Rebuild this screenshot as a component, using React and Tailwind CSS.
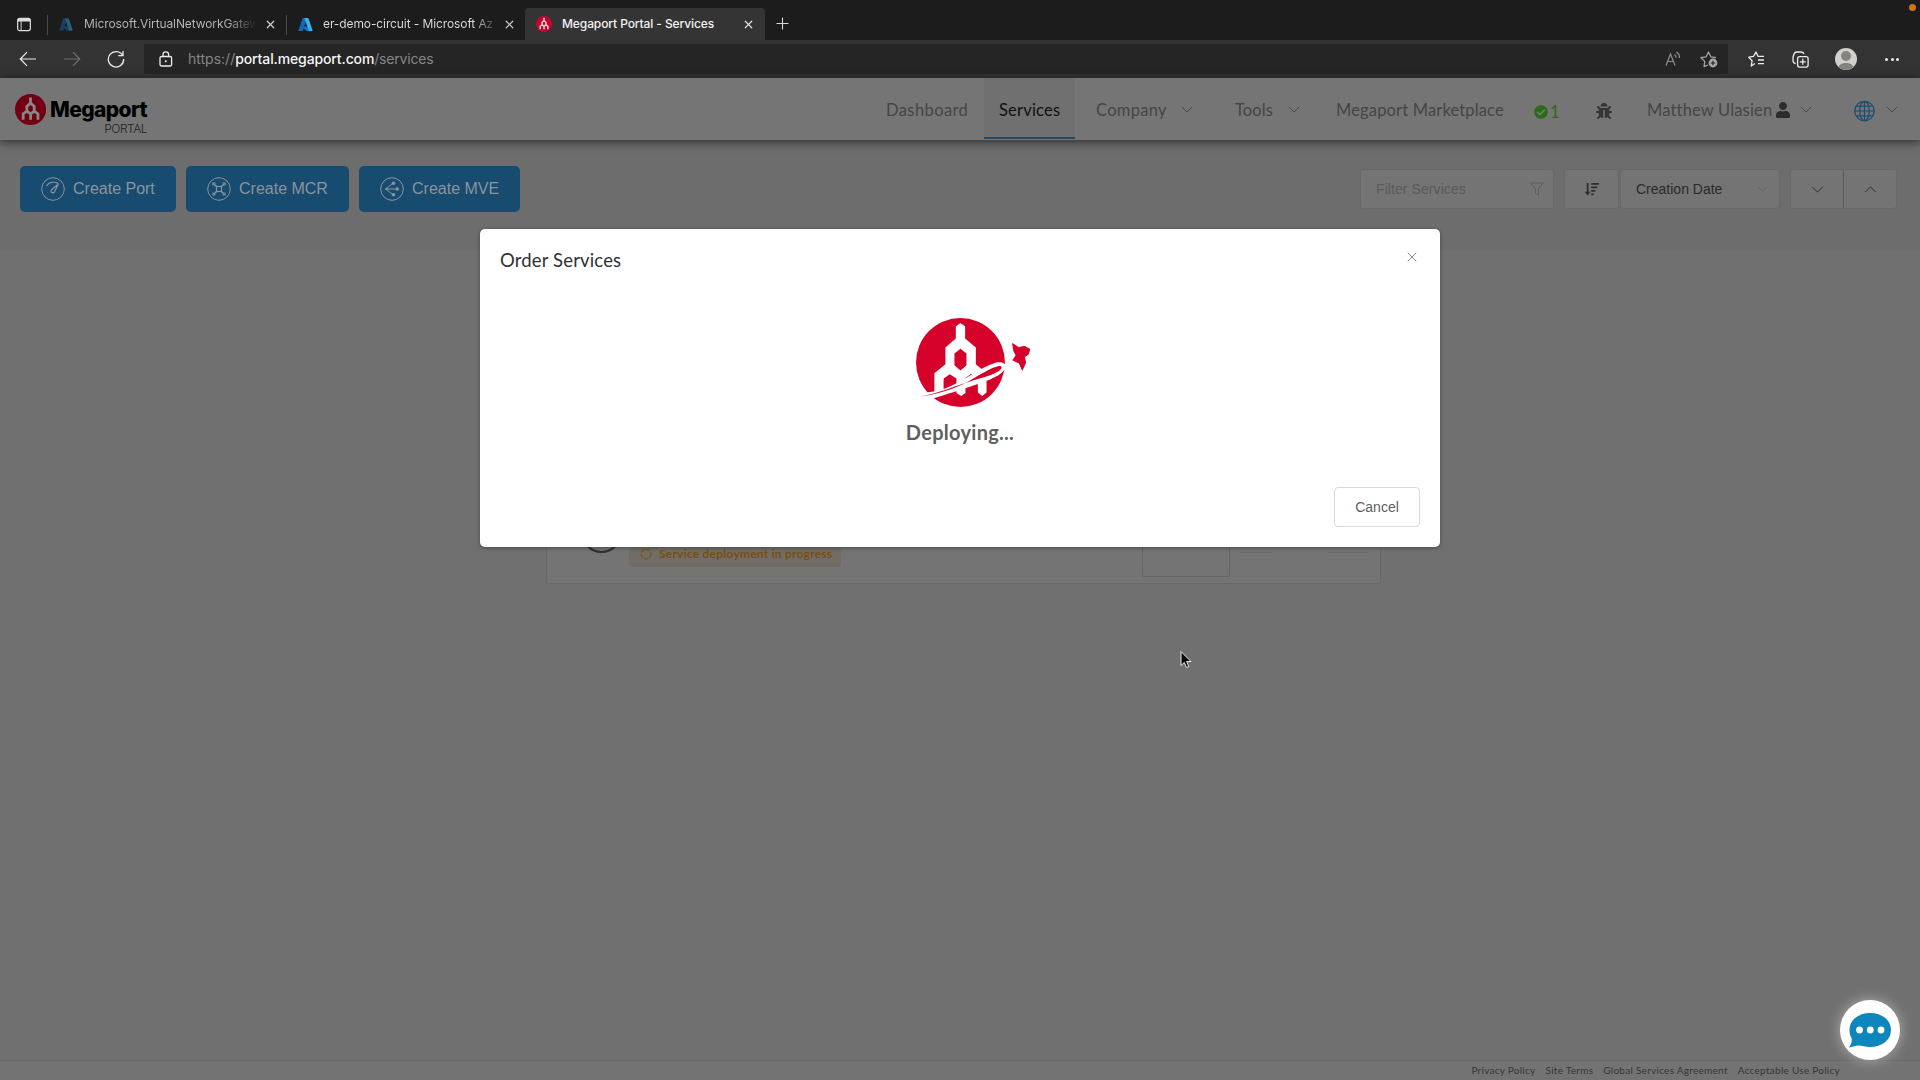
import { Plus, X } from "lucide-react";
import { FaBug, FaCheckCircle, FaSortAmountDown, FaUser } from "react-icons/fa";

function Azure({ className }) {
  return (
    <svg viewBox="0 0 16 16" className={className}>
      <path d="M5.4 1h4.4L5.2 14.4a.8.8 0 0 1-.7.6H1.2a.8.8 0 0 1-.7-1L4.7 1.5A.8.8 0 0 1 5.4 1z" fill="#1566b4" />
      <path d="M11.9 10H5l-.3.9 4.2 3.9.8.2h3.8z" fill="#0f6fc6" />
      <path d="M10.6 1H6.2l.7.5L11.300 14a.8.8 0 0 1-.7 1h4.200a.8.8 0 0 0 .7-1L11.300 1.500a.8.8 0 0 0-.7-.5z" fill="#36b1ee" />
    </svg>
  );
}

function Chevron({ up, className }) {
  return (
    <svg viewBox="0 0 14 8" className={className} fill="none" stroke="currentColor" strokeWidth="1.1">
      <path d={up ? "M1 7L7 1l6 6" : "M1 1l6 6 6-6"} />
    </svg>
  );
}

function SmallLogo({ className, bg, fg }) {
  return (
    <svg viewBox="107 55 266 266" className={className}>
      <circle cx="240" cy="188" r="133" fill={bg} />
      <g fill="none" stroke={fg} strokeWidth="24" strokeLinejoin="round">
        <path d="M240 84V132M240 133L209 160V202L177 226V276M240 133L272 160V202L304 226V276M209 202L241 226V276M272 202L241 226" />
      </g>
    </svg>
  );
}

function DeployLogo() {
  return (
    <svg viewBox="101 49 350 278" className="ml-[25px] h-[93px] w-[117px]">
      <circle cx="240" cy="188" r="133" fill="#d5012b" />
      <path d="M240 70l14 10v36l32 27v50l32 27v58l-13 10-13-10v-42l-20-14-17 12v45l-13 9-14-9v-43l-20-13-18 13v42h-28v-58l33-27v-50l31-27V80z" fill="#fff" />
      <path d="M240 147l18 14v35l-18 16-18-16v-35zM207 226l16 12v16l-33 12v-27z" fill="#d5012b" />
      <path d="M100 280C150 278 175 273 205 261C260 238 300 202 345 189C366 184 380 193 374 206C362 228 325 241 290 253C250 266 205 282 150 298L100 300z" fill="#fff" />
      <path d="M120 290C190 279 235 262 280 235C310 217 335 203 352 199C364 197 367 203 358 211C338 226 305 233 272 243C225 258 180 278 120 290z" fill="#d5012b" />
      <path d="M396 132l17 11 19-3 15 8-4 15-12 8 4 17-10 22-9-20-19-9 10-15-7-12z" fill="#d5012b" stroke="#d5012b" strokeWidth="3" strokeLinejoin="round" />
    </svg>
  );
}

function ActionIcon({ kind }) {
  return (
    <svg viewBox="0 0 24 24" className="h-6 w-6 shrink-0" fill="none" stroke="currentColor" strokeWidth="1">
      <circle cx="12" cy="12" r="11.300" />
      {kind === "port" && (
        <>
          <path d="M5.500 9C8 5 13 4.500 17.500 6.500" strokeWidth="1.300" />
          <path d="M17.300 7l-4 8.200a1.800 1.800 0 0 1-2.900-2.200z" strokeWidth="1.200" />
        </>
      )}
      {kind === "mcr" && (
        <g strokeWidth="1.500">
          <path d="M6.500 6.500l3 3M17.500 6.500l-3 3M6.500 17.500l3-3M17.500 17.500l-3-3" />
          <path d="M6 8.500V6h2.500M15.500 6H18v2.500M6 15.500V18h2.500M15.500 18H18v-2.500" strokeWidth="1.200" />
          <rect x="9.500" y="9.500" width="5" height="5" strokeWidth="1.200" />
        </g>
      )}
      {kind === "mve" && (
        <>
          <path d="M6 12h10M6.500 11.500l6-5M6.500 12.500l6 5" />
          <g fill="currentColor" stroke="none">
            <circle cx="6.500" cy="12" r="1.300" />
            <circle cx="13.500" cy="6.300" r="1.800" />
            <circle cx="17.200" cy="12" r="1.800" />
            <circle cx="13.500" cy="17.700" r="1.800" />
          </g>
        </>
      )}
    </svg>
  );
}

function ActionButton({ kind, width, children }) {
  return (
    <button className={`flex h-[46px] items-center gap-[8px] rounded-[5px] bg-[#174b70] pl-[21px] text-base whitespace-nowrap text-[#8b949a] ${width}`}>
      <ActionIcon kind={kind} />
      {children}
    </button>
  );
}

function TabBar() {
  return (
    <div className="relative flex h-10 items-center bg-[#1c1c1c] text-xs tracking-[-0.1px]">
      <svg viewBox="0 0 15 15" className="mt-[8px] ml-[17px] h-[15px] w-[14px]" fill="none" stroke="#dedede">
        <rect x=".7" y=".9" width="13.600" height="13.200" rx="2.200" strokeWidth="1.300" />
        <path d="M1 2.700h13" strokeWidth="3.200" />
        <path d="M4.400 4v10" strokeWidth="1" />
      </svg>
      <div className="mt-[9px] ml-4 h-5 w-px bg-[#4a4a4a]" />
      <div className="mt-2 flex h-8 w-[238px] items-center pl-[11px]">
        <Azure className="h-[15px] w-[14px] opacity-45" />
        <span className="ml-[11px] w-[180px] bg-linear-to-r from-[#b9b9b9] from-80% to-[#1c1c1c] to-96% bg-clip-text whitespace-nowrap text-transparent">Microsoft.VirtualNetworkGatew</span>
        <X className="h-[13px] w-[13px] text-[#cfcfcf]" strokeWidth={2.200} />
      </div>
      <div className="mt-[9px] h-5 w-px bg-[#4a4a4a]" />
      <div className="mt-2 flex h-8 w-[238px] items-center pl-[11px]">
        <Azure className="h-[15px] w-[15px]" />
        <span className="ml-[10px] w-[180px] bg-linear-to-r from-[#e0e0e0] from-84% to-[#1c1c1c] to-98% bg-clip-text whitespace-nowrap text-transparent">er-demo-circuit - Microsoft Az</span>
        <X className="h-[13px] w-[13px] text-[#cfcfcf]" strokeWidth={2.200} />
      </div>
      <div className="mt-2 flex h-8 w-[240px] items-center rounded-t-[4px] bg-[#343434] pl-[11px]">
        <SmallLogo className="h-4 w-4" bg="#c4062c" fg="#f0d9de" />
        <span className="ml-[10px] w-[176px] font-medium whitespace-nowrap text-[#f2f2f2]">Megaport Portal - Services</span>
        <X className="ml-[4px] h-[13px] w-[13px] text-[#e0e0e0]" strokeWidth={2.200} />
      </div>
      <Plus className="mt-[7px] ml-[8px] h-[19px] w-[19px] text-[#dadada]" strokeWidth={1.400} />
      <div className="absolute top-[4px] right-[4px] h-[7px] w-[7px] rounded-full bg-[#d0741c]" />
    </div>
  );
}

function AddressBar() {
  return (
    <div className="flex h-[38px] items-center bg-[#333333]">
      <svg viewBox="0 0 18 16" className="ml-[19px] h-[16px] w-[18px]" fill="none" stroke="#ececec" strokeWidth="1.200">
        <path d="M17 8H1.500M8 1.200L1.300 8 8 14.800" />
      </svg>
      <svg viewBox="0 0 18 16" className="ml-[26px] h-[16px] w-[18px]" fill="none" stroke="#6f6f6f" strokeWidth="1.200">
        <path d="M1 8h15.500M10 1.200L16.700 8 10 14.800" />
      </svg>
      <svg viewBox="0 0 18 18" className="ml-[26px] h-[18px] w-[18px]" fill="none" stroke="#ececec" strokeWidth="1.300">
        <path d="M15.700 5.500A7.700 7.700 0 1 0 16.700 9M16 1v4.700h-4.700" />
      </svg>
      <div className="ml-[19px] flex h-[30px] w-[1584px] items-center rounded-[2px] bg-[#252525]">
        <svg viewBox="0 0 14 16" className="ml-[15px] h-[16px] w-[14px]" fill="none" stroke="#ececec" strokeWidth="1.300">
          <rect x="1" y="5.500" width="11.600" height="9.500" rx="1.600" />
          <path d="M4 5.500V3.600a2.800 2.800 0 0 1 5.600 0v1.900" />
          <circle cx="6.800" cy="10.200" r="1" fill="#ececec" stroke="none" />
        </svg>
        <div className="ml-[15px] flex text-sm text-[#858585]">
          <span>https://</span>
          <span className="font-medium tracking-[-0.12px] text-[#f5f5f5]">portal.megaport.com</span>
          <span className="tracking-[-0.200px]">/services</span>
        </div>
        <svg viewBox="0 0 16 16" className="ml-auto h-4 w-4" fill="none" stroke="#8d8d8d" strokeWidth="1.200">
          <path d="M1 14.500L5.500 3l4.500 11.500M2.600 10.500h5.900" />
          <path d="M9.500 3.500a4 4 0 0 1 1.500 3.300M11.500 1a7 7 0 0 1 3 6" />
        </svg>
        <svg viewBox="0 0 18 18" className="mr-[10px] ml-[19px] h-[18px] w-[18px]" fill="none" stroke="#a8a8a8" strokeWidth="1.200" strokeLinejoin="round">
          <path d="M8 15l-4 1.600.8-5.200L1 7.700l5-.8L8.500 2 11 6.900l5 .8" />
          <circle cx="13" cy="13" r="4.400" fill="#a8a8a8" stroke="none" />
          <path d="M13 10.700v4.600M10.700 13h4.600" stroke="#252525" />
        </svg>
      </div>
      <svg viewBox="0 0 17 16" className="ml-[20px] h-4 w-[17px]" fill="none" stroke="#ececec" strokeWidth="1.300" strokeLinejoin="round">
        <path d="M7 12.500L3.200 15l.9-5.200L.8 6.200l4.700-.8L8 1l2 4.300h6M10 9h6M10 12.700h6" />
      </svg>
      <svg viewBox="0 0 17 17" className="ml-[27px] h-[17px] w-[17px]" fill="none" stroke="#ececec" strokeWidth="1.300">
        <rect x="5.600" y="5.600" width="10.500" height="10.500" rx="2" />
        <path d="M10.800 7.800v6M7.800 10.800h6M3.700 12.500A3 3 0 0 1 1 9.500V6l1-3a3 3 0 0 1 3-2h4.500a3 3 0 0 1 2.500 2" />
      </svg>
      <svg viewBox="0 0 22 22" className="ml-[26px] h-[22px] w-[22px]">
        <circle cx="11" cy="11" r="11" fill="#d2d0cd" />
        <circle cx="11" cy="8" r="5" fill="#858380" />
        <path d="M3.500 19c1.500-5.500 13.500-5.500 15 0a11 11 0 0 1-15 0z" fill="#858380" />
      </svg>
      <div className="ml-[28px] flex gap-[2.500px]">
        <div className="h-[3px] w-[3px] rounded-full bg-[#ececec]" />
        <div className="h-[3px] w-[3px] rounded-full bg-[#ececec]" />
        <div className="h-[3px] w-[3px] rounded-full bg-[#ececec]" />
      </div>
    </div>
  );
}

function NavBar() {
  return (
    <header className="relative z-10 flex h-[62px] bg-[#757575] font-[Lato,sans-serif] text-[16.500px] whitespace-nowrap text-[#454545] shadow-[0_2px_9px_rgba(0,0,0,0.6)]">
      <div className="flex w-[870px] pl-[15px]">
        <SmallLogo className="mt-[16px] h-[31px] w-[31px]" bg="#720012" fg="#8b8686" />
        <div className="ml-[3px] w-[98px] text-right font-[Inter,sans-serif]">
          <div className="mt-[20px] text-[21px] leading-6 font-extrabold tracking-[-0.600px] text-black">Megaport</div>
          <div className="mt-[1px] text-xs leading-3 font-light tracking-[-0.500px] text-[#222]">PORTAL</div>
        </div>
      </div>
      <div className="flex w-[114px] items-center pt-[2px] pl-4 tracking-[0.400px]">Dashboard</div>
      <div className="mb-px flex w-[91px] items-center border-b-2 border-[#1d4a6b] bg-[#707070] pt-[5px] pl-[15px] tracking-[0.200px] text-[#111]">Services</div>
      <div className="flex w-[140px] items-center pt-[2px] pl-[21px] tracking-[0.300px]">
        Company
        <Chevron className="-mt-px ml-[14px] h-[7px] w-[12px]" />
      </div>
      <div className="flex w-[105px] items-center pt-[2px] pl-5 tracking-[0.100px]">
        Tools
        <Chevron className="-mt-px ml-[15px] h-[7px] w-[12px]" />
      </div>
      <div className="flex w-[198px] items-center pt-[2px] pl-4 tracking-[0.150px]">Megaport Marketplace</div>
      <div className="flex w-[27px] items-center pt-[6px] text-[#2a6b18]">
        <FaCheckCircle className="ml-[16px] h-[14px] w-[14px] shrink-0" />
        <span className="ml-[2px]">1</span>
      </div>
      <FaBug className="mt-[25px] ml-[51px] h-4 w-4 text-[#353535]" />
      <div className="ml-[35px] flex items-center pt-[2px] tracking-[0.170px]">
        Matthew Ulasien
        <FaUser className="-mt-px ml-[4px] h-4 w-[14px] text-[#2c2c2c]" />
        <Chevron className="-mt-px ml-[10px] h-[7px] w-[12px]" />
      </div>
      <svg viewBox="0 0 22 22" className="mt-[22px] ml-[42px] h-[22px] w-[21px]" fill="none" stroke="#1b4d72" strokeWidth="1.300">
        <circle cx="11" cy="11" r="10.200" />
        <ellipse cx="11" cy="11" rx="5" ry="10.200" />
        <path d="M11 1v20M1 11h20M2.500 6h17M2.500 16h17" />
      </svg>
      <Chevron className="mt-[28px] ml-[11px] h-[7px] w-[12px]" />
    </header>
  );
}

function Toolbar() {
  return (
    <div className="flex h-[110px] bg-[#6d6d6d] pl-[20px]">
      <div className="mt-[26px] flex">
        <ActionButton kind="port" width="w-[156px]">Create Port</ActionButton>
        <ActionButton kind="mcr" width="w-[163px] ml-[10px]">Create MCR</ActionButton>
        <ActionButton kind="mve" width="w-[161px] ml-[10px]">Create MVE</ActionButton>
      </div>
      <div className="mt-[29px] ml-auto flex h-[40px] text-sm whitespace-nowrap">
        <div className="flex w-[194px] items-center justify-between rounded-[3px] border border-[#696969] bg-[#747474] pr-[9px] pl-[15px] tracking-[0.080px] text-[#5a5a5a]">
          Filter Services
          <svg viewBox="0 0 14 14" className="h-[14px] w-[14px]" fill="none" stroke="#5c5c5c">
            <path d="M.8 1h12.400L8.500 7v6l-3-1.500V7z" />
          </svg>
        </div>
        <div className="ml-[10px] flex w-[55px] items-center justify-center rounded-[3px] border border-[#696969] bg-[#747474]">
          <FaSortAmountDown className="h-[14px] w-[14px] text-[#2e2e2e]" />
        </div>
        <div className="ml-[1px] flex w-[160px] items-center justify-between rounded-[4px] border border-[#696969] bg-[#747474] pr-[11px] pl-[15px] text-[#2a2a2a]">
          Creation Date
          <Chevron className="h-[6px] w-[11px] text-[#5f5f5f]" />
        </div>
        <div className="ml-[10px] flex w-[107px] divide-x divide-[#5c5c5c] rounded-[3px] border border-[#696969] bg-[#747474] text-[#2e2e2e]">
          <div className="flex flex-1 items-center justify-center">
            <Chevron className="h-[7px] w-[13px]" />
          </div>
          <div className="flex flex-1 items-center justify-center">
            <Chevron up className="h-[7px] w-[13px]" />
          </div>
        </div>
        <div className="w-[23px]" />
      </div>
    </div>
  );
}

function ServiceCard() {
  return (
    <div className="ml-[546px] flex h-[84px] w-[835px] items-end rounded-[3px] border border-[#686868] bg-[#747474] font-[Lato,sans-serif]">
      <div className="mb-[30px] ml-[34px] h-[41px] w-[41px] shrink-0 rounded-full border-2 border-[#2f2f2f]" />
      <div className="mb-[16px] ml-[7px] flex h-[26px] w-[212px] shrink-0 items-center rounded-[3px] bg-[#716d66] pl-[11px] text-xs font-bold tracking-[0.220px] whitespace-nowrap text-[#774f10]">
        <svg viewBox="0 0 12 12" className="mr-[7px] h-[12px] w-[12px]" fill="none" stroke="#77571f" strokeWidth="1.500" strokeDasharray="4 1.500">
          <circle cx="6" cy="6" r="4.800" />
        </svg>
        Service deployment in progress
      </div>
      <div className="mb-[6px] ml-[301px] h-[60px] w-[88px] shrink-0 rounded-[2px] border border-[#656565]" />
      <div className="mb-[30px] ml-[10px] h-px w-8 bg-[#696969]" />
      <div className="mb-[30px] ml-[56px] h-px w-10 bg-[#696969]" />
    </div>
  );
}

function OrderDialog() {
  return (
    <div role="dialog" className="absolute top-[229px] left-[480px] z-20 h-[318px] w-[960px] rounded-[5px] bg-white shadow-[0_1px_4px_rgba(0,0,0,0.35)]">
      <div className="flex items-start justify-between pt-[17px] pr-[20px] pl-5">
        <h2 className="font-[Lato,sans-serif] text-[18.500px] leading-7 tracking-[0.150px] text-[#303133]">Order Services</h2>
        <X className="mt-[3px] h-[16px] w-[16px] text-[#8c8e92]" strokeWidth={1.500} />
      </div>
      <div className="mt-[42px] flex flex-col items-center">
        <DeployLogo />
        <div className="mt-[9px] font-[Lato,sans-serif] text-xl leading-7 font-bold tracking-[0.280px] text-[#5f5f5f]">Deploying...</div>
      </div>
      <div className="mt-[41px] flex justify-end pr-5">
        <button className="h-[40px] w-[86px] rounded-[4px] border border-[#d9dbdf] text-sm text-[#5c5e62]">Cancel</button>
      </div>
    </div>
  );
}

export default function App() {
  return (
    <div className="relative flex h-[1080px] w-[1920px] flex-col overflow-hidden bg-[#707070] font-['Liberation_Sans',Arial,sans-serif]">
      <div className="font-[Inter,sans-serif]">
        <TabBar />
        <AddressBar />
      </div>
      <NavBar />
      <Toolbar />
      <main className="flex-1 pt-[250px]">
        <ServiceCard />
      </main>
      <footer className="flex h-[20px] justify-end gap-[10px] border-t border-[#696969] bg-[#737373] pr-[80px] font-[Lato,sans-serif] text-[10px] leading-[19px] tracking-[0.270px] text-[#363636]">
        <span>Privacy Policy</span>
        <span>Site Terms</span>
        <span>Global Services Agreement</span>
        <span>Acceptable Use Policy</span>
      </footer>
      <OrderDialog />
      <div className="absolute top-[1000px] left-[1840px] z-20 flex h-[60px] w-[60px] items-center justify-center rounded-full bg-white shadow-[0_0_14px_rgba(255,255,255,0.45)]">
        <svg viewBox="0 0 42 35" className="h-[35px] w-[42px]">
          <path d="M21 0C33 0 42 7 42 17S33 34 21 34c-5 0-8-1.500-11-1.500-3.500 0-6 1.500-10 2 2-3 3.500-6 2.500-9.500C1 22.500.500 20 .5 17 .5 7 9.500 0 21 0z" fill="#0d86bd" />
          <g fill="#fff">
            <circle cx="10.500" cy="17" r="3.400" />
            <circle cx="21.300" cy="17" r="3.400" />
            <circle cx="32" cy="17" r="3.400" />
          </g>
        </svg>
      </div>
      <svg viewBox="0 0 12 18" className="absolute top-[650px] left-[1180px] z-30 h-[19px] w-[12px]">
        <path d="M1 1v14l3.300-3 2.200 5 2.300-1-2.200-5H11z" fill="#0a0a0a" stroke="#e8e8e8" strokeWidth="1" />
      </svg>
    </div>
  );
}
